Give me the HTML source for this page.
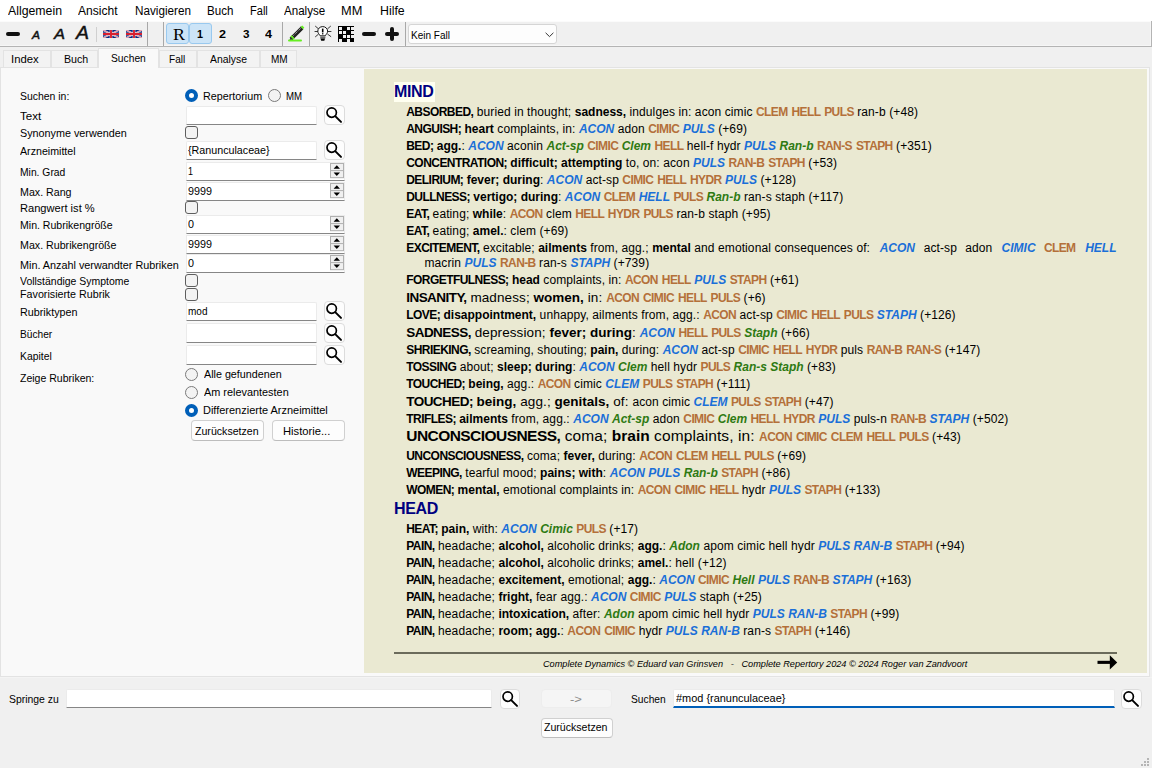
<!DOCTYPE html><html><head><meta charset="utf-8"><style>
*{box-sizing:border-box}
html,body{margin:0;padding:0}
body{width:1152px;height:768px;overflow:hidden;background:#f0f0f0;position:relative;font-family:'Liberation Sans', sans-serif;color:#000}
.ui{position:absolute;white-space:nowrap;font-family:'Liberation Sans', sans-serif;color:#000}
.box{position:absolute}
.ct{position:absolute;white-space:nowrap;font-family:'Liberation Sans',sans-serif;line-height:17px;color:#000}
.ct{letter-spacing:0.1px}
.ct b{font-weight:bold;letter-spacing:0}
.bc{letter-spacing:-0.55px}
.o{color:#b4703a;font-weight:bold;font-size:12px;letter-spacing:-0.6px;word-spacing:1.2px}
.bl,.g{letter-spacing:0}
.bl{color:#1a6fd8;font-weight:bold;font-style:italic}
.g{color:#2e7a12;font-weight:bold;font-style:italic}
.hd{font-size:16px;font-weight:bold;color:#000080;line-height:20px;letter-spacing:-0.35px}
.just{text-align:justify;white-space:normal;height:17px;overflow:hidden}
.jf{display:inline-block;width:100%;height:0}
</style></head><body>
<div class="box" style="left:0px;top:0px;width:1152px;height:21px;background:#fff"></div>
<div class="box" style="left:0px;top:21px;width:1152px;height:1px;background:#fbfbfb"></div>
<div id="t1" class="ui" style="left:8px;top:3.84px;font-size:12px;line-height:14px;transform:scaleX(1.0246);transform-origin:0 0;">Allgemein</div>
<div id="t2" class="ui" style="left:78.4px;top:3.84px;font-size:12px;line-height:14px;transform:scaleX(1.0061);transform-origin:0 0;">Ansicht</div>
<div id="t3" class="ui" style="left:134.5px;top:3.84px;font-size:12px;line-height:14px;transform:scaleX(0.9760);transform-origin:0 0;">Navigieren</div>
<div id="t4" class="ui" style="left:207.3px;top:3.84px;font-size:12px;line-height:14px;transform:scaleX(0.9649);transform-origin:0 0;">Buch</div>
<div id="t5" class="ui" style="left:250px;top:3.84px;font-size:12px;line-height:14px;transform:scaleX(0.9202);transform-origin:0 0;">Fall</div>
<div id="t6" class="ui" style="left:284.2px;top:3.84px;font-size:12px;line-height:14px;transform:scaleX(0.9648);transform-origin:0 0;">Analyse</div>
<div id="t7" class="ui" style="left:341.3px;top:3.84px;font-size:12px;line-height:14px;transform:scaleX(1.0650);transform-origin:0 0;">MM</div>
<div id="t8" class="ui" style="left:379.5px;top:3.84px;font-size:12px;line-height:14px;transform:scaleX(1.0285);transform-origin:0 0;">Hilfe</div>
<div class="box" style="left:0px;top:22px;width:1152px;height:24px;background:#f0f0f0"></div>
<div class="box" style="left:0px;top:45px;width:1151px;height:1px;background:#f6f6f6"></div>
<div class="box" style="left:1150px;top:22px;width:1px;height:24px;background:#f6f6f6"></div>
<div class="box" style="left:0px;top:46px;width:1152px;height:1px;background:#b4b4b4"></div>
<div class="box" style="left:1151px;top:21px;width:1px;height:26px;background:#b4b4b4"></div>
<div class="box" style="left:6px;top:32px;width:14px;height:4px;background:#111;border-radius:2px"></div>
<div id="t9" class="ui" style="left:31.5px;top:29.19px;font-size:11px;line-height:13px;color:#111;transform:scaleX(1.0894);transform-origin:0 0;font-style:italic;-webkit-text-stroke:0.45px #111;">A</div>
<div id="t10" class="ui" style="left:53.5px;top:25.98px;font-size:14.5px;line-height:17px;color:#111;transform:scaleX(1.1373);transform-origin:0 0;font-style:italic;-webkit-text-stroke:0.45px #111;">A</div>
<div id="t11" class="ui" style="left:76px;top:22.76px;font-size:18px;line-height:21px;color:#111;transform:scaleX(1.0819);transform-origin:0 0;font-style:italic;-webkit-text-stroke:0.45px #111;">A</div>
<div class="box" style="left:96px;top:27px;width:1px;height:15px;background:#d0d0d0"></div>
<svg class="box" style="left:103px;top:30px" width="16" height="8" viewBox="0 0 16 8">
<rect width="16" height="8" rx="0.8" fill="#0a2a80"/>
<path d="M0 0L16 8M16 0L0 8" stroke="#e8e8f0" stroke-width="1.7"/>
<path d="M0 0L16 8M16 0L0 8" stroke="#e04050" stroke-width="0.6"/>
<path d="M8 0V8M0 4H16" stroke="#f4f4f4" stroke-width="2.6"/>
<path d="M8 0V8M0 4H16" stroke="#d82030" stroke-width="1.9"/>
</svg>
<svg class="box" style="left:126px;top:30px" width="16" height="8" viewBox="0 0 16 8">
<rect width="16" height="8" rx="0.8" fill="#0a2a80"/>
<path d="M0 0L16 8M16 0L0 8" stroke="#e8e8f0" stroke-width="1.7"/>
<path d="M0 0L16 8M16 0L0 8" stroke="#e04050" stroke-width="0.6"/>
<path d="M8 0V8M0 4H16" stroke="#f4f4f4" stroke-width="2.6"/>
<path d="M8 0V8M0 4H16" stroke="#d82030" stroke-width="1.9"/>
</svg>
<div class="box" style="left:147px;top:22px;width:1px;height:24px;background:#a8a8a8"></div>
<div class="box" style="left:163px;top:22px;width:1px;height:24px;background:#a8a8a8"></div>
<div class="box" style="left:166px;top:23px;width:23px;height:21px;background:#cce4f7;border:1px solid #99c9ef;border-radius:3px"></div>
<div class="box" style="left:189px;top:23px;width:23px;height:21px;background:#cce4f7;border:1px solid #99c9ef;border-radius:3px"></div>
<div id="t12" class="ui" style="left:172.5px;top:25.11px;font-size:17px;line-height:20px;color:#000;transform:scaleX(1.0579);transform-origin:0 0;font-family:'Liberation Serif',serif;">R</div>
<div id="t13" class="ui" style="left:196.5px;top:28.19px;font-size:11px;line-height:13px;font-weight:bold;transform:scaleX(0.9796);transform-origin:0 0;">1</div>
<div id="t14" class="ui" style="left:219.3px;top:28.19px;font-size:11px;line-height:13px;font-weight:bold;transform:scaleX(1.1429);transform-origin:0 0;">2</div>
<div id="t15" class="ui" style="left:242.8px;top:28.19px;font-size:11px;line-height:13px;font-weight:bold;transform:scaleX(1.0612);transform-origin:0 0;">3</div>
<div id="t16" class="ui" style="left:265.3px;top:28.19px;font-size:11px;line-height:13px;font-weight:bold;transform:scaleX(1.1429);transform-origin:0 0;">4</div>
<div class="box" style="left:282px;top:22px;width:1px;height:24px;background:#a8a8a8"></div>
<svg class="box" style="left:286px;top:24px" width="20" height="20" viewBox="286 24 20 20">
<path d="M290.2 37.6L300.8 27L303 29.2L292.4 39.8Z" fill="#222" stroke="#111" stroke-width="0.8"/>
<path d="M292 37L301.5 27.6" stroke="#fff" stroke-width="0.7" stroke-dasharray="1 1"/>
<path d="M300.6 26.8L302.2 25.4L304.3 27.5L303 29.2Z" fill="#66ee22"/>
<path d="M290.2 37.6L292.4 39.8L289.5 40.5Z" fill="#333"/>
<path d="M291 35.8L294 38.8" stroke="#66ee22" stroke-width="1.8"/>
<path d="M289 40.6H301" stroke="#66ee22" stroke-width="2" stroke-linecap="round"/>
</svg>
<div class="box" style="left:309px;top:22px;width:1px;height:24px;background:#a8a8a8"></div>
<svg class="box" style="left:314px;top:25px" width="18" height="18" viewBox="314 25 18 18">
<g stroke="#222" stroke-width="0.9" fill="none" stroke-linecap="round">
<path d="M315 31.5H318M327.5 31.5H331M315.5 26.3L318.2 28.6M330.5 26.3L327.8 28.6M315.5 36.7L318.2 34.4M330.8 36.5L327.8 34.3"/>
</g>
<path d="M322.7 26.6C319.9 26.6 317.8 28.6 317.8 31.2C317.8 33.2 319.3 34.3 320.2 35.8H325.2C326.1 34.3 327.6 33.2 327.6 31.2C327.6 28.6 325.5 26.6 322.7 26.6Z" fill="#fff" stroke="#111" stroke-width="1"/>
<path d="M322.7 28.6V32.4" stroke="#000" stroke-width="1.6"/><rect x="322" y="33.2" width="1.4" height="1.2" fill="#000"/>
<rect x="320.3" y="35.8" width="5" height="2.8" fill="#8a8a8a"/><rect x="320.3" y="37" width="5" height="0.6" fill="#555"/>
<path d="M320.5 38.6H325L324.3 40.8H321.2Z" fill="#000"/>
</svg>
<svg class="box" style="left:338px;top:26px" width="16" height="16" viewBox="0 0 16 16" shape-rendering="crispEdges"><g fill="#000">
<rect x="0" y="0" width="16" height="1"/><rect x="0" y="4" width="16" height="1"/><rect x="0" y="8" width="16" height="1"/><rect x="0" y="12" width="16" height="1"/>
<rect x="0" y="0" width="1" height="16"/><rect x="4" y="0" width="1" height="16"/><rect x="8" y="0" width="1" height="16"/><rect x="12" y="0" width="1" height="16"/>
<rect x="4" y="0" width="4" height="4"/><rect x="8" y="4" width="4" height="4"/><rect x="0" y="8" width="4" height="4"/><rect x="4" y="12" width="4" height="4"/><rect x="12" y="12" width="4" height="4"/>
</g></svg>
<div class="box" style="left:362px;top:32px;width:14px;height:4px;background:#111;border-radius:2px"></div>
<div class="box" style="left:385px;top:32px;width:14px;height:4px;background:#111;border-radius:2px"></div>
<div class="box" style="left:390px;top:27px;width:4px;height:14px;background:#111;border-radius:2px"></div>
<div class="box" style="left:405px;top:22px;width:1px;height:24px;background:#a8a8a8"></div>
<div class="box" style="left:408px;top:24px;width:149px;height:20px;background:#fdfdfd;border:1px solid #d5d5d5;border-radius:3px"></div>
<div id="t17" class="ui" style="left:411.3px;top:28.52px;font-size:11.5px;line-height:13px;transform:scaleX(0.8715);transform-origin:0 0;">Kein Fall</div>
<svg class="box" style="left:544.5px;top:32px" width="9" height="6" viewBox="0 0 9 6"><path d="M0.6 0.8L4.5 4.6L8.4 0.8" fill="none" stroke="#333" stroke-width="1"/></svg>
<div class="box" style="left:0px;top:47px;width:1152px;height:21px;background:#f0f0f0"></div>
<div class="box" style="left:3px;top:50px;width:48px;height:18px;background:#f3f3f3;border:1px solid #e3e3e3;border-bottom:none"></div>
<div class="box" style="left:51px;top:50px;width:46.599999999999994px;height:18px;background:#f3f3f3;border:1px solid #e3e3e3;border-bottom:none"></div>
<div class="box" style="left:97.6px;top:48px;width:61.5px;height:21px;background:#f9f9f9;border:1px solid #e3e3e3;border-bottom:none"></div>
<div class="box" style="left:159.1px;top:50px;width:38.20000000000002px;height:18px;background:#f3f3f3;border:1px solid #e3e3e3;border-bottom:none"></div>
<div class="box" style="left:197.3px;top:50px;width:62.30000000000001px;height:18px;background:#f3f3f3;border:1px solid #e3e3e3;border-bottom:none"></div>
<div class="box" style="left:259.6px;top:50px;width:37.599999999999966px;height:18px;background:#f3f3f3;border:1px solid #e3e3e3;border-bottom:none"></div>
<div id="t18" class="ui" style="left:11.3px;top:52.69px;font-size:11px;line-height:13px;transform:scaleX(1.0289);transform-origin:0 0;">Index</div>
<div id="t19" class="ui" style="left:63.7px;top:52.69px;font-size:11px;line-height:13px;transform:scaleX(0.9690);transform-origin:0 0;">Buch</div>
<div id="t20" class="ui" style="left:110.6px;top:51.69px;font-size:11px;line-height:13px;transform:scaleX(0.9327);transform-origin:0 0;">Suchen</div>
<div id="t21" class="ui" style="left:169.3px;top:52.69px;font-size:11px;line-height:13px;transform:scaleX(0.9135);transform-origin:0 0;">Fall</div>
<div id="t22" class="ui" style="left:210px;top:52.69px;font-size:11px;line-height:13px;transform:scaleX(0.9453);transform-origin:0 0;">Analyse</div>
<div id="t23" class="ui" style="left:271px;top:52.69px;font-size:11px;line-height:13px;transform:scaleX(0.9112);transform-origin:0 0;">MM</div>
<div class="box" style="left:0px;top:67px;width:1150px;height:10px;background:#e3e3e3"></div>
<div class="box" style="left:1px;top:68px;width:1148px;height:608px;background:#f9f9f9"></div>
<div class="box" style="left:0px;top:676px;width:1150px;height:1px;background:#e3e3e3"></div>
<div class="box" style="left:0px;top:67px;width:1px;height:610px;background:#e3e3e3"></div>
<div class="box" style="left:1149px;top:67px;width:1px;height:610px;background:#e3e3e3"></div>
<div class="box" style="left:0px;top:677px;width:1152px;height:1px;background:#f4f4f4"></div>
<div class="box" style="left:364px;top:69px;width:783px;height:604px;background:#eae9d2"></div>
<div class="box" style="left:97.6px;top:48px;width:61.5px;height:20px;background:#f9f9f9;border:1px solid #e3e3e3;border-bottom:none"></div>
<div id="t24" class="ui" style="left:110.6px;top:51.69px;font-size:11px;line-height:13px;transform:scaleX(0.9327);transform-origin:0 0;">Suchen</div>
<div id="t25" class="ui" style="left:19.7px;top:89.69px;font-size:11px;line-height:13px;transform:scaleX(0.9484);transform-origin:0 0;">Suchen in:</div>
<div id="t26" class="ui" style="left:19.7px;top:109.69px;font-size:11px;line-height:13px;transform:scaleX(1.0551);transform-origin:0 0;">Text</div>
<div id="t27" class="ui" style="left:19.7px;top:126.69px;font-size:11px;line-height:13px;transform:scaleX(0.9803);transform-origin:0 0;">Synonyme verwenden</div>
<div id="t28" class="ui" style="left:19.7px;top:144.69px;font-size:11px;line-height:13px;transform:scaleX(0.9675);transform-origin:0 0;">Arzneimittel</div>
<div id="t29" class="ui" style="left:19.7px;top:165.69px;font-size:11px;line-height:13px;transform:scaleX(0.9379);transform-origin:0 0;">Min. Grad</div>
<div id="t30" class="ui" style="left:19.7px;top:185.69px;font-size:11px;line-height:13px;transform:scaleX(0.9689);transform-origin:0 0;">Max. Rang</div>
<div id="t31" class="ui" style="left:19.7px;top:201.69px;font-size:11px;line-height:13px;transform:scaleX(1.0097);transform-origin:0 0;">Rangwert ist %</div>
<div id="t32" class="ui" style="left:19.7px;top:218.69px;font-size:11px;line-height:13px;transform:scaleX(0.9587);transform-origin:0 0;">Min. Rubrikengröße</div>
<div id="t33" class="ui" style="left:19.7px;top:238.69px;font-size:11px;line-height:13px;transform:scaleX(0.9688);transform-origin:0 0;">Max. Rubrikengröße</div>
<div id="t34" class="ui" style="left:19.7px;top:258.69px;font-size:11px;line-height:13px;transform:scaleX(0.9831);transform-origin:0 0;">Min. Anzahl verwandter Rubriken</div>
<div id="t35" class="ui" style="left:19.7px;top:274.69px;font-size:11px;line-height:13px;transform:scaleX(0.9508);transform-origin:0 0;">Vollständige Symptome</div>
<div id="t36" class="ui" style="left:19.7px;top:287.69px;font-size:11px;line-height:13px;transform:scaleX(0.9749);transform-origin:0 0;">Favorisierte Rubrik</div>
<div id="t37" class="ui" style="left:19.7px;top:305.69px;font-size:11px;line-height:13px;transform:scaleX(0.9795);transform-origin:0 0;">Rubriktypen</div>
<div id="t38" class="ui" style="left:19.7px;top:327.69px;font-size:11px;line-height:13px;transform:scaleX(0.9237);transform-origin:0 0;">Bücher</div>
<div id="t39" class="ui" style="left:19.7px;top:349.69px;font-size:11px;line-height:13px;transform:scaleX(0.9423);transform-origin:0 0;">Kapitel</div>
<div id="t40" class="ui" style="left:19.7px;top:371.69px;font-size:11px;line-height:13px;transform:scaleX(0.9568);transform-origin:0 0;">Zeige Rubriken:</div>
<div class="box" style="left:185px;top:89px;width:13px;height:13px;background:#fff;border:4px solid #005fb8;border-radius:50%"></div>
<div id="t41" class="ui" style="left:203px;top:89.69px;font-size:11px;line-height:13px;transform:scaleX(0.9780);transform-origin:0 0;">Repertorium</div>
<div class="box" style="left:268px;top:89px;width:13px;height:13px;background:#f3f3f3;border:1px solid #7a7a7a;border-radius:50%"></div>
<div id="t42" class="ui" style="left:286.4px;top:89.69px;font-size:11px;line-height:13px;transform:scaleX(0.8784);transform-origin:0 0;">MM</div>
<div class="box" style="left:186px;top:106px;width:131px;height:19px;background:#fff;border:1px solid #ebebeb;border-bottom:1px solid #868686;border-radius:2px 2px 0 0"></div>
<div class="box" style="left:324px;top:105px;width:20.5px;height:20px;background:#fdfdfd;border:1px solid #dcdcdc;border-radius:4px"></div>
<svg class="box" style="left:324px;top:105px" width="20" height="20" viewBox="0 0 20 20"><circle cx="7.7" cy="7.6" r="4.7" fill="none" stroke="#000" stroke-width="1.7"/><path d="M11.2 11.1L17 16.9" stroke="#000" stroke-width="2" stroke-linecap="round"/></svg>
<div class="box" style="left:185px;top:126px;width:13px;height:13px;background:#f3f3f3;border:1px solid #5e5e5e;border-radius:3px"></div>
<div class="box" style="left:186px;top:141px;width:131px;height:19px;background:#fff;border:1px solid #ebebeb;border-bottom:1px solid #868686;border-radius:2px 2px 0 0"></div>
<div id="t43" class="ui" style="left:188.4px;top:144.19px;font-size:11px;line-height:13px;transform:scaleX(0.9738);transform-origin:0 0;">{Ranunculaceae}</div>
<div class="box" style="left:324px;top:140px;width:20.5px;height:20px;background:#fdfdfd;border:1px solid #dcdcdc;border-radius:4px"></div>
<svg class="box" style="left:324px;top:140px" width="20" height="20" viewBox="0 0 20 20"><circle cx="7.7" cy="7.6" r="4.7" fill="none" stroke="#000" stroke-width="1.7"/><path d="M11.2 11.1L17 16.9" stroke="#000" stroke-width="2" stroke-linecap="round"/></svg>
<div class="box" style="left:186px;top:162px;width:159px;height:19px;background:#fff;border:1px solid #ebebeb;border-bottom:1px solid #868686"></div>
<svg class="box" style="left:330px;top:163.4px" width="14" height="15.2" viewBox="0 0 14 15.2"><rect x="0.5" y="0.5" width="13" height="7.6" fill="#f0f0f0" stroke="#b0b0b0"/><rect x="0.5" y="7.6" width="13" height="7.1" fill="#f0f0f0" stroke="#b0b0b0"/><path d="M3.6 5.7L6.8 2.3L10 5.7Z" fill="#000"/><path d="M3.6 9.5L6.8 12.9L10 9.5Z" fill="#000"/></svg>
<div id="t44" class="ui" style="left:188px;top:165.19px;font-size:11px;line-height:13px;transform:scaleX(0.8163);transform-origin:0 0;">1</div>
<div class="box" style="left:186px;top:182px;width:159px;height:19px;background:#fff;border:1px solid #ebebeb;border-bottom:1px solid #868686"></div>
<svg class="box" style="left:330px;top:183.4px" width="14" height="15.2" viewBox="0 0 14 15.2"><rect x="0.5" y="0.5" width="13" height="7.6" fill="#f0f0f0" stroke="#b0b0b0"/><rect x="0.5" y="7.6" width="13" height="7.1" fill="#f0f0f0" stroke="#b0b0b0"/><path d="M3.6 5.7L6.8 2.3L10 5.7Z" fill="#000"/><path d="M3.6 9.5L6.8 12.9L10 9.5Z" fill="#000"/></svg>
<div id="t45" class="ui" style="left:188px;top:185.19px;font-size:11px;line-height:13px;transform:scaleX(0.9802);transform-origin:0 0;">9999</div>
<div class="box" style="left:185px;top:201px;width:13px;height:13px;background:#f3f3f3;border:1px solid #5e5e5e;border-radius:3px"></div>
<div class="box" style="left:186px;top:215px;width:159px;height:19px;background:#fff;border:1px solid #ebebeb;border-bottom:1px solid #868686"></div>
<svg class="box" style="left:330px;top:216.4px" width="14" height="15.2" viewBox="0 0 14 15.2"><rect x="0.5" y="0.5" width="13" height="7.6" fill="#f0f0f0" stroke="#b0b0b0"/><rect x="0.5" y="7.6" width="13" height="7.1" fill="#f0f0f0" stroke="#b0b0b0"/><path d="M3.6 5.7L6.8 2.3L10 5.7Z" fill="#000"/><path d="M3.6 9.5L6.8 12.9L10 9.5Z" fill="#000"/></svg>
<div id="t46" class="ui" style="left:188px;top:218.19px;font-size:11px;line-height:13px;transform:scaleX(0.9796);transform-origin:0 0;">0</div>
<div class="box" style="left:186px;top:235px;width:159px;height:19px;background:#fff;border:1px solid #ebebeb;border-bottom:1px solid #868686"></div>
<svg class="box" style="left:330px;top:236.4px" width="14" height="15.2" viewBox="0 0 14 15.2"><rect x="0.5" y="0.5" width="13" height="7.6" fill="#f0f0f0" stroke="#b0b0b0"/><rect x="0.5" y="7.6" width="13" height="7.1" fill="#f0f0f0" stroke="#b0b0b0"/><path d="M3.6 5.7L6.8 2.3L10 5.7Z" fill="#000"/><path d="M3.6 9.5L6.8 12.9L10 9.5Z" fill="#000"/></svg>
<div id="t47" class="ui" style="left:188px;top:238.19px;font-size:11px;line-height:13px;transform:scaleX(0.9802);transform-origin:0 0;">9999</div>
<div class="box" style="left:186px;top:254px;width:159px;height:19px;background:#fff;border:1px solid #ebebeb;border-bottom:1px solid #868686"></div>
<svg class="box" style="left:330px;top:255.4px" width="14" height="15.2" viewBox="0 0 14 15.2"><rect x="0.5" y="0.5" width="13" height="7.6" fill="#f0f0f0" stroke="#b0b0b0"/><rect x="0.5" y="7.6" width="13" height="7.1" fill="#f0f0f0" stroke="#b0b0b0"/><path d="M3.6 5.7L6.8 2.3L10 5.7Z" fill="#000"/><path d="M3.6 9.5L6.8 12.9L10 9.5Z" fill="#000"/></svg>
<div id="t48" class="ui" style="left:188px;top:257.19px;font-size:11px;line-height:13px;transform:scaleX(0.9796);transform-origin:0 0;">0</div>
<div class="box" style="left:185px;top:274px;width:13px;height:13px;background:#f3f3f3;border:1px solid #5e5e5e;border-radius:3px"></div>
<div class="box" style="left:185px;top:287.5px;width:13px;height:13px;background:#f3f3f3;border:1px solid #5e5e5e;border-radius:3px"></div>
<div class="box" style="left:186px;top:302px;width:131px;height:19px;background:#fff;border:1px solid #ebebeb;border-bottom:1px solid #868686;border-radius:2px 2px 0 0"></div>
<div id="t49" class="ui" style="left:187.5px;top:305.19px;font-size:11px;line-height:13px;transform:scaleX(0.9109);transform-origin:0 0;">mod</div>
<div class="box" style="left:324px;top:301px;width:20.5px;height:20px;background:#fdfdfd;border:1px solid #dcdcdc;border-radius:4px"></div>
<svg class="box" style="left:324px;top:301px" width="20" height="20" viewBox="0 0 20 20"><circle cx="7.7" cy="7.6" r="4.7" fill="none" stroke="#000" stroke-width="1.7"/><path d="M11.2 11.1L17 16.9" stroke="#000" stroke-width="2" stroke-linecap="round"/></svg>
<div class="box" style="left:186px;top:323px;width:131px;height:20px;background:#fff;border:1px solid #ebebeb;border-bottom:1px solid #868686;border-radius:2px 2px 0 0"></div>
<div class="box" style="left:324px;top:323px;width:20.5px;height:20px;background:#fdfdfd;border:1px solid #dcdcdc;border-radius:4px"></div>
<svg class="box" style="left:324px;top:323px" width="20" height="20" viewBox="0 0 20 20"><circle cx="7.7" cy="7.6" r="4.7" fill="none" stroke="#000" stroke-width="1.7"/><path d="M11.2 11.1L17 16.9" stroke="#000" stroke-width="2" stroke-linecap="round"/></svg>
<div class="box" style="left:186px;top:345px;width:131px;height:20px;background:#fff;border:1px solid #ebebeb;border-bottom:1px solid #868686;border-radius:2px 2px 0 0"></div>
<div class="box" style="left:324px;top:345px;width:20.5px;height:20px;background:#fdfdfd;border:1px solid #dcdcdc;border-radius:4px"></div>
<svg class="box" style="left:324px;top:345px" width="20" height="20" viewBox="0 0 20 20"><circle cx="7.7" cy="7.6" r="4.7" fill="none" stroke="#000" stroke-width="1.7"/><path d="M11.2 11.1L17 16.9" stroke="#000" stroke-width="2" stroke-linecap="round"/></svg>
<div class="box" style="left:185px;top:368px;width:13px;height:13px;background:#f3f3f3;border:1px solid #7a7a7a;border-radius:50%"></div>
<div id="t50" class="ui" style="left:203.6px;top:368.19px;font-size:11px;line-height:13px;transform:scaleX(0.9759);transform-origin:0 0;">Alle gefundenen</div>
<div class="box" style="left:185px;top:386px;width:13px;height:13px;background:#f3f3f3;border:1px solid #7a7a7a;border-radius:50%"></div>
<div id="t51" class="ui" style="left:203.6px;top:386.19px;font-size:11px;line-height:13px;transform:scaleX(0.9894);transform-origin:0 0;">Am relevantesten</div>
<div class="box" style="left:185px;top:404px;width:13px;height:13px;background:#fff;border:4px solid #005fb8;border-radius:50%"></div>
<div id="t52" class="ui" style="left:203.3px;top:404.19px;font-size:11px;line-height:13px;transform:scaleX(0.9974);transform-origin:0 0;">Differenzierte Arzneimittel</div>
<div class="box" style="left:191px;top:420px;width:72.5px;height:20.5px;background:#fdfdfd;border:1px solid #d0d0d0;border-bottom-color:#bdbdbd;border-radius:4px"></div>
<div id="t53" class="ui" style="left:194.7px;top:424.99px;font-size:11px;line-height:13px;transform:scaleX(0.9632);transform-origin:0 0;">Zurücksetzen</div>
<div class="box" style="left:272px;top:420px;width:72.5px;height:20.5px;background:#fdfdfd;border:1px solid #d0d0d0;border-bottom-color:#bdbdbd;border-radius:4px"></div>
<div id="t54" class="ui" style="left:283.3px;top:424.99px;font-size:11px;line-height:13px;transform:scaleX(1.0179);transform-origin:0 0;">Historie...</div>
<div id="t55" class="ui" style="left:8.5px;top:692.69px;font-size:11px;line-height:13px;transform:scaleX(0.9469);transform-origin:0 0;">Springe zu</div>
<div class="box" style="left:66px;top:689px;width:426px;height:19px;background:#fff;border:1px solid #ebebeb;border-bottom:1px solid #868686;border-radius:2px 2px 0 0"></div>
<div class="box" style="left:499.5px;top:688.5px;width:20.5px;height:20px;background:#fdfdfd;border:1px solid #dcdcdc;border-radius:4px"></div>
<svg class="box" style="left:499.5px;top:688.5px" width="20" height="20" viewBox="0 0 20 20"><circle cx="7.7" cy="7.6" r="4.7" fill="none" stroke="#000" stroke-width="1.7"/><path d="M11.2 11.1L17 16.9" stroke="#000" stroke-width="2" stroke-linecap="round"/></svg>
<div class="box" style="left:541px;top:689px;width:71px;height:19px;background:#f5f5f5;border:1px solid #ededed;border-radius:4px"></div>
<div id="t56" class="ui" style="left:570px;top:692.69px;font-size:11px;line-height:13px;color:#8a8a8a;transform:scaleX(1.1889);transform-origin:0 0;">-&gt;</div>
<div class="box" style="left:541px;top:717.5px;width:71.5px;height:20.0px;background:#fdfdfd;border:1px solid #d0d0d0;border-bottom-color:#bdbdbd;border-radius:4px"></div>
<div id="t57" class="ui" style="left:543.9px;top:721.19px;font-size:11px;line-height:13px;transform:scaleX(0.9617);transform-origin:0 0;">Zurücksetzen</div>
<div id="t58" class="ui" style="left:631.3px;top:692.69px;font-size:11px;line-height:13px;transform:scaleX(0.9300);transform-origin:0 0;">Suchen</div>
<div class="box" style="left:673px;top:689px;width:442px;height:19px;background:#fff;border:1px solid #ebebeb;border-bottom:2px solid #005fb8;border-radius:2px 2px 0 0"></div>
<div id="t59" class="ui" style="left:676.4px;top:692.19px;font-size:11px;line-height:13px;transform:scaleX(0.9937);transform-origin:0 0;">#mod {ranunculaceae}</div>
<div class="box" style="left:1121px;top:688.5px;width:20.5px;height:20px;background:#fdfdfd;border:1px solid #dcdcdc;border-radius:4px"></div>
<svg class="box" style="left:1121px;top:688.5px" width="20" height="20" viewBox="0 0 20 20"><circle cx="7.7" cy="7.6" r="4.7" fill="none" stroke="#000" stroke-width="1.7"/><path d="M11.2 11.1L17 16.9" stroke="#000" stroke-width="2" stroke-linecap="round"/></svg>
<div class="box" style="left:1147px;top:758px;width:2px;height:2px;background:#b5b5b5"></div>
<div class="box" style="left:1144px;top:761px;width:2px;height:2px;background:#b5b5b5"></div>
<div class="box" style="left:1147px;top:761px;width:2px;height:2px;background:#b5b5b5"></div>
<div class="box" style="left:1141px;top:764px;width:2px;height:2px;background:#b5b5b5"></div>
<div class="box" style="left:1144px;top:764px;width:2px;height:2px;background:#b5b5b5"></div>
<div class="box" style="left:1147px;top:764px;width:2px;height:2px;background:#b5b5b5"></div>
<div class="ct" id="L0" style="left:406.25px;top:104.34px;font-size:12px"><b><span class="bc">ABSORBED,</span></b> buried in thought; <b>sadness,</b> indulges in: acon cimic <span class="o">CLEM HELL PULS</span> ran-b (+48)</div>
<div class="ct" id="L1" style="left:406.25px;top:121.34px;font-size:12px"><b><span class="bc">ANGUISH;</span> heart</b> complaints, in: <span class="bl">ACON</span> adon <span class="o">CIMIC</span> <span class="bl">PULS</span> (+69)</div>
<div class="ct" id="L2" style="left:406.25px;top:138.34px;font-size:12px"><b><span class="bc">BED;</span> agg.</b>: <span class="bl">ACON</span> aconin <span class="g">Act-sp</span> <span class="o">CIMIC</span> <span class="g">Clem</span> <span class="o">HELL</span> hell-f hydr <span class="bl">PULS</span> <span class="g">Ran-b</span> <span class="o">RAN-S STAPH</span> (+351)</div>
<div class="ct" id="L3" style="left:406.25px;top:155.34px;font-size:12px"><b><span class="bc">CONCENTRATION;</span> difficult; attempting</b> to, on: acon <span class="bl">PULS</span> <span class="o">RAN-B STAPH</span> (+53)</div>
<div class="ct" id="L4" style="left:406.25px;top:172.34px;font-size:12px"><b><span class="bc">DELIRIUM;</span> fever; during</b>: <span class="bl">ACON</span> act-sp <span class="o">CIMIC HELL HYDR</span> <span class="bl">PULS</span> (+128)</div>
<div class="ct" id="L5" style="left:406.25px;top:189.34px;font-size:12px"><b><span class="bc">DULLNESS;</span> vertigo; during</b>: <span class="bl">ACON</span> <span class="o">CLEM</span> <span class="bl">HELL</span> <span class="o">PULS</span> <span class="g">Ran-b</span> ran-s staph (+117)</div>
<div class="ct" id="L6" style="left:406.25px;top:206.34px;font-size:12px"><b><span class="bc">EAT,</span></b> eating; <b>while</b>: <span class="o">ACON</span> clem <span class="o">HELL HYDR PULS</span> ran-b staph (+95)</div>
<div class="ct" id="L7" style="left:406.25px;top:223.34px;font-size:12px"><b><span class="bc">EAT,</span></b> eating; <b>amel.</b>: clem (+69)</div>
<div class="ct" id="L8" style="left:406.25px;top:240.34px;font-size:12px"><b><span class="bc">EXCITEMENT,</span></b> excitable; <b>ailments</b> from, agg.; <b>mental</b> and emotional consequences of:</div>
<div class="ct" style="left:879.7px;top:240.34px;font-size:12px"><span class="bl">ACON</span></div>
<div class="ct" style="left:923.7px;top:240.34px;font-size:12px">act-sp</div>
<div class="ct" style="left:965.2px;top:240.34px;font-size:12px">adon</div>
<div class="ct" style="left:1001.6px;top:240.34px;font-size:12px"><span class="bl">CIMIC</span></div>
<div class="ct" style="left:1043.9px;top:240.34px;font-size:12px"><span class="o">CLEM</span></div>
<div class="ct" style="left:1085.2px;top:240.34px;font-size:12px"><span class="bl">HELL</span></div>
<div class="ct" id="L9" style="left:424.5px;top:255.34px;font-size:12px">macrin <span class="bl">PULS</span> <span class="o">RAN-B</span> ran-s <span class="bl">STAPH</span> (+739)</div>
<div class="ct" id="L10" style="left:406.25px;top:272.34px;font-size:12px"><b><span class="bc">FORGETFULNESS;</span> head</b> complaints, in: <span class="o">ACON HELL</span> <span class="bl">PULS</span> <span class="o">STAPH</span> (+61)</div>
<div class="ct" id="L11" style="left:406.25px;top:289.34px;font-size:12px"><span style="font-size:13.5px"><b><span class="bc">INSANITY,</span></b> madness; <b>women,</b> in: </span><span class="o">ACON CIMIC HELL PULS</span> (+6)</div>
<div class="ct" id="L12" style="left:406.25px;top:307.34px;font-size:12px"><b><span class="bc">LOVE;</span> disappointment,</b> unhappy, ailments from, agg.: <span class="o">ACON</span> act-sp <span class="o">CIMIC HELL PULS</span> <span class="bl">STAPH</span> (+126)</div>
<div class="ct" id="L13" style="left:406.25px;top:324.34px;font-size:12px"><span style="font-size:13.5px"><b><span class="bc">SADNESS,</span></b> depression; <b>fever; during</b>: </span><span class="bl">ACON</span> <span class="o">HELL PULS</span> <span class="g">Staph</span> (+66)</div>
<div class="ct" id="L14" style="left:406.25px;top:342.34px;font-size:12px"><b><span class="bc">SHRIEKING,</span></b> screaming, shouting; <b>pain,</b> during: <span class="bl">ACON</span> act-sp <span class="o">CIMIC HELL HYDR</span> puls <span class="o">RAN-B RAN-S</span> (+147)</div>
<div class="ct" id="L15" style="left:406.25px;top:359.34px;font-size:12px"><b><span class="bc">TOSSING</span></b> about; <b>sleep; during</b>: <span class="bl">ACON</span> <span class="g">Clem</span> hell hydr <span class="o">PULS</span> <span class="g">Ran-s Staph</span> (+83)</div>
<div class="ct" id="L16" style="left:406.25px;top:376.34px;font-size:12px"><b><span class="bc">TOUCHED;</span> being,</b> agg.: <span class="o">ACON</span> cimic <span class="bl">CLEM</span> <span class="o">PULS STAPH</span> (+111)</div>
<div class="ct" id="L17" style="left:406.25px;top:393.34px;font-size:12px"><span style="font-size:13.5px"><b><span class="bc">TOUCHED;</span> being,</b> agg.; <b>genitals,</b> of: </span>acon cimic <span class="bl">CLEM</span> <span class="o">PULS STAPH</span> (+47)</div>
<div class="ct" id="L18" style="left:406.25px;top:411.34px;font-size:12px"><b><span class="bc">TRIFLES;</span> ailments</b> from, agg.: <span class="bl">ACON</span> <span class="g">Act-sp</span> adon <span class="o">CIMIC</span> <span class="g">Clem</span> <span class="o">HELL HYDR</span> <span class="bl">PULS</span> puls-n <span class="o">RAN-B</span> <span class="bl">STAPH</span> (+502)</div>
<div class="ct" id="L19" style="left:406.25px;top:427.34px;font-size:12px"><span style="font-size:15.5px"><b><span class="bc">UNCONSCIOUSNESS,</span></b> coma; <b>brain</b> complaints, in: </span><span class="o">ACON CIMIC CLEM HELL PULS</span> (+43)</div>
<div class="ct" id="L20" style="left:406.25px;top:448.34px;font-size:12px"><b><span class="bc">UNCONSCIOUSNESS,</span></b> coma; <b>fever,</b> during: <span class="o">ACON CLEM HELL PULS</span> (+69)</div>
<div class="ct" id="L21" style="left:406.25px;top:465.34px;font-size:12px"><b><span class="bc">WEEPING,</span></b> tearful mood; <b>pains; with</b>: <span class="bl">ACON PULS</span> <span class="g">Ran-b</span> <span class="o">STAPH</span> (+86)</div>
<div class="ct" id="L22" style="left:406.25px;top:482.34px;font-size:12px"><b><span class="bc">WOMEN;</span> mental,</b> emotional complaints in: <span class="o">ACON CIMIC HELL</span> hydr <span class="bl">PULS</span> <span class="o">STAPH</span> (+133)</div>
<div class="ct" id="L23" style="left:406.25px;top:521.34px;font-size:12px"><b><span class="bc">HEAT;</span> pain,</b> with: <span class="bl">ACON</span> <span class="g">Cimic</span> <span class="o">PULS</span> (+17)</div>
<div class="ct" id="L24" style="left:406.25px;top:538.34px;font-size:12px"><b><span class="bc">PAIN,</span></b> headache; <b>alcohol,</b> alcoholic drinks; <b>agg.</b>: <span class="g">Adon</span> apom cimic hell hydr <span class="bl">PULS RAN-B</span> <span class="o">STAPH</span> (+94)</div>
<div class="ct" id="L25" style="left:406.25px;top:555.34px;font-size:12px"><b><span class="bc">PAIN,</span></b> headache; <b>alcohol,</b> alcoholic drinks; <b>amel.</b>: hell (+12)</div>
<div class="ct" id="L26" style="left:406.25px;top:572.34px;font-size:12px"><b><span class="bc">PAIN,</span></b> headache; <b>excitement,</b> emotional; <b>agg.</b>: <span class="bl">ACON</span> <span class="o">CIMIC</span> <span class="g">Hell</span> <span class="bl">PULS</span> <span class="o">RAN-B</span> <span class="bl">STAPH</span> (+163)</div>
<div class="ct" id="L27" style="left:406.25px;top:589.34px;font-size:12px"><b><span class="bc">PAIN,</span></b> headache; <b>fright,</b> fear agg.: <span class="bl">ACON</span> <span class="o">CIMIC</span> <span class="bl">PULS</span> staph (+25)</div>
<div class="ct" id="L28" style="left:406.25px;top:606.34px;font-size:12px"><b><span class="bc">PAIN,</span></b> headache; <b>intoxication,</b> after: <span class="g">Adon</span> apom cimic hell hydr <span class="bl">PULS RAN-B</span> <span class="o">STAPH</span> (+99)</div>
<div class="ct" id="L29" style="left:406.25px;top:623.34px;font-size:12px"><b><span class="bc">PAIN,</span></b> headache; <b>room; agg.</b>: <span class="o">ACON CIMIC</span> hydr <span class="bl">PULS RAN-B</span> ran-s <span class="o">STAPH</span> (+146)</div>
<div class="box" style="left:394px;top:82px;width:41px;height:20px;background:#fffff0"></div>
<div class="ct hd" style="left:394px;top:82.46px">MIND</div>
<div class="box" style="left:394px;top:499px;width:45px;height:20px;background:#eae9d2"></div>
<div class="ct hd" style="left:394px;top:499.46px">HEAD</div>
<div class="box" style="left:394px;top:652px;width:723px;height:2px;background:#6b6b5b"></div>
<div id="t60" class="ui" style="left:543.3px;top:657.77px;font-size:9.6px;line-height:11px;transform:scaleX(0.9560);transform-origin:0 0;font-style:italic;">Complete Dynamics © Eduard van Grinsven &nbsp; - &nbsp; Complete Repertory 2024 © 2024 Roger van Zandvoort</div>
<svg class="box" style="left:1097px;top:655px" width="21" height="15" viewBox="0 0 21 15"><path d="M0.5 5.8H13.5V8.9H0.5Z" fill="#000"/><path d="M12.8 0.2L20.2 7.4L12.8 14.4Z" fill="#000"/></svg>
</body></html>
